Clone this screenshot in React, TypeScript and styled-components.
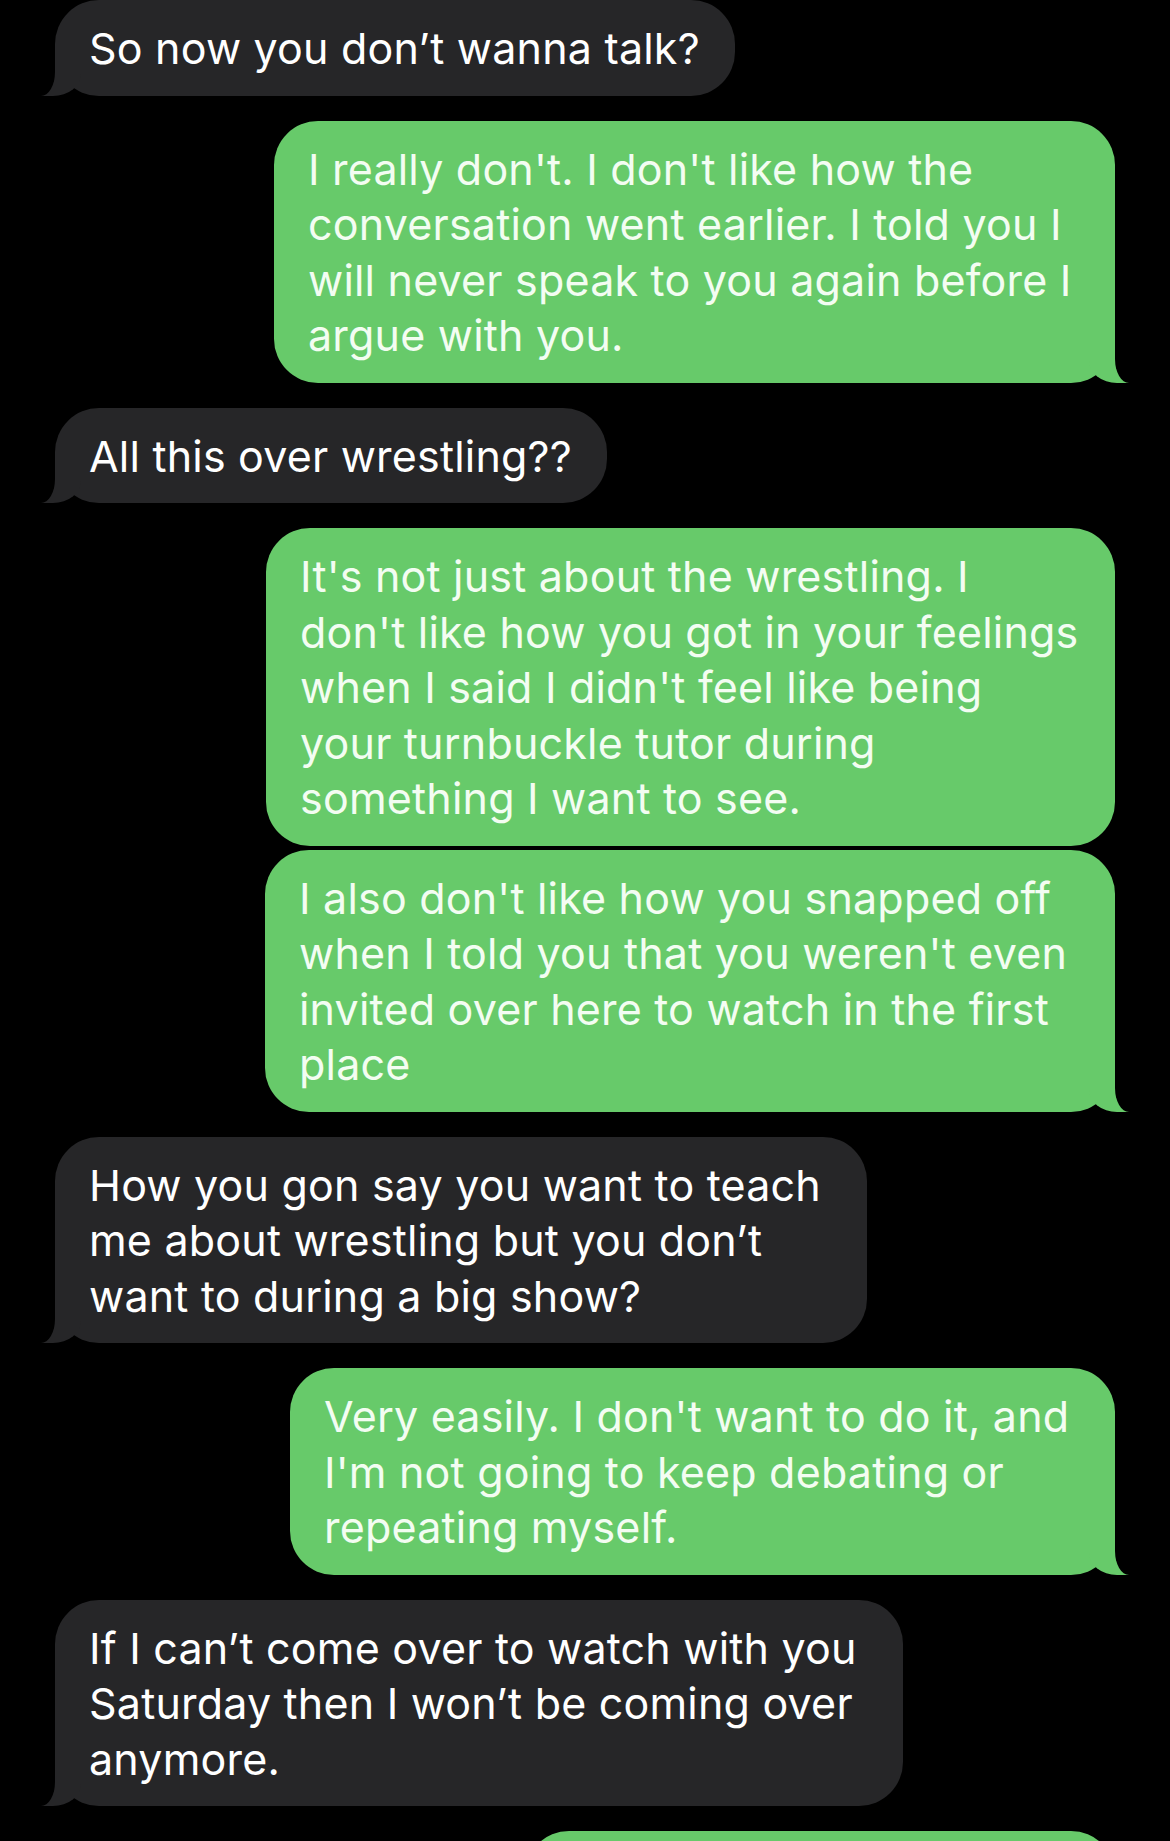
import React from "react";
import styled, { createGlobalStyle, css } from "styled-components";

type Side = "in" | "out";

interface Message {
  side: Side;
  width: number;
  lines: string[];
  tail?: boolean;
  gap?: number;
}

const GREEN = "#67ca6a";
const GREY = "#262628";

const messages: Message[] = [
  { side: "in", width: 680, tail: true, lines: ["So now you don’t wanna talk?"] },
  {
    side: "out",
    width: 841,
    tail: true,
    lines: [
      "I really don't. I don't like how the",
      "conversation went earlier. I told you I",
      "will never speak to you again before I",
      "argue with you.",
    ],
  },
  { side: "in", width: 552, tail: true, lines: ["All this over wrestling??"] },
  {
    side: "out",
    width: 849,
    lines: [
      "It's not just about the wrestling. I",
      "don't like how you got in your feelings",
      "when I said I didn't feel like being",
      "your turnbuckle tutor during",
      "something I want to see.",
    ],
  },
  {
    side: "out",
    width: 850,
    tail: true,
    gap: 4,
    lines: [
      "I also don't like how you snapped off",
      "when I told you that you weren't even",
      "invited over here to watch in the first",
      "place",
    ],
  },
  {
    side: "in",
    width: 812,
    tail: true,
    lines: [
      "How you gon say you want to teach",
      "me about wrestling but you don’t",
      "want to during a big show?",
    ],
  },
  {
    side: "out",
    width: 825,
    tail: true,
    lines: [
      "Very easily. I don't want to do it, and",
      "I'm not going to keep debating or",
      "repeating myself.",
    ],
  },
  {
    side: "in",
    width: 848,
    tail: true,
    lines: [
      "If I can’t come over to watch with you",
      "Saturday then I won’t be coming over",
      "anymore.",
    ],
  },
  { side: "out", width: 590, tail: true, lines: ["\u00a0", "\u00a0"] },
];

const GlobalStyle = createGlobalStyle`
  html, body {
    margin: 0;
    padding: 0;
    background: #000;
  }
  body {
    font-family: Inter, "Noto Sans", "Liberation Sans", sans-serif;
    -webkit-font-smoothing: antialiased;
  }
`;

const Thread = styled.div`
  display: flex;
  flex-direction: column;
  padding: 0 55px;
  height: 1841px;
  overflow: hidden;
  background: #000;
`;

const Row = styled.div<{ $side: Side; $gap: number }>`
  display: flex;
  justify-content: ${(p) => (p.$side === "out" ? "flex-end" : "flex-start")};
  margin-top: ${(p) => p.$gap}px;
  &:first-child {
    margin-top: 0;
  }
`;

const tailIn = css`
  &::before {
    content: "";
    position: absolute;
    bottom: 0;
    left: -14px;
    width: 40px;
    height: 44px;
    background: ${GREY};
    border-bottom-right-radius: 28px 22px;
  }
  &::after {
    content: "";
    position: absolute;
    bottom: 0;
    left: -60px;
    width: 60px;
    height: 44px;
    background: #000;
    border-bottom-right-radius: 14px 24px;
  }
`;

const tailOut = css`
  &::before {
    content: "";
    position: absolute;
    bottom: 0;
    right: -14px;
    width: 40px;
    height: 44px;
    background: ${GREEN};
    border-bottom-left-radius: 28px 22px;
  }
  &::after {
    content: "";
    position: absolute;
    bottom: 0;
    right: -60px;
    width: 60px;
    height: 44px;
    background: #000;
    border-bottom-left-radius: 14px 24px;
  }
`;

const Bubble = styled.div<{ $side: Side; $width: number; $tail: boolean }>`
  position: relative;
  box-sizing: border-box;
  width: ${(p) => p.$width}px;
  padding: 21px 34px 19px;
  border-radius: 44px;
  background: ${(p) => (p.$side === "out" ? GREEN : GREY)};
  color: ${(p) => (p.$side === "out" ? "#f3fdf2" : "#ffffff")};
  font-size: 43px;
  line-height: 55.5px;
  letter-spacing: 0.2px;
  white-space: nowrap;
  ${(p) => p.$tail && (p.$side === "out" ? tailOut : tailIn)}
`;

const Line = styled.span`
  display: block;
  position: relative;
  z-index: 1;
`;

export default function App() {
  return (
    <>
      <GlobalStyle />
      <Thread>
        {messages.map((m, i) => (
          <Row key={i} $side={m.side} $gap={m.gap ?? 25}>
            <Bubble $side={m.side} $width={m.width} $tail={!!m.tail}>
              {m.lines.map((l, j) => (
                <Line key={j}>{l}</Line>
              ))}
            </Bubble>
          </Row>
        ))}
      </Thread>
    </>
  );
}
